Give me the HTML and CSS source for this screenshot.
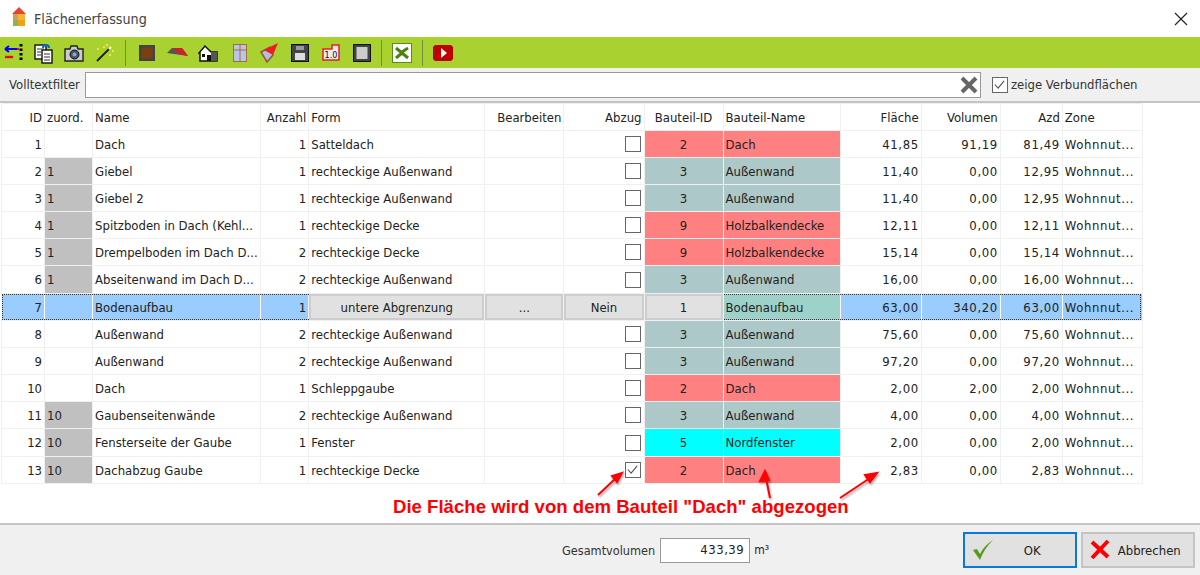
FILE: index.html
```html
<!DOCTYPE html>
<html lang="de">
<head>
<meta charset="utf-8">
<title>Flächenerfassung</title>
<link rel="stylesheet" href="styles.css">
</head>
<body>
<div class="dialog">
  <header class="titlebar">
    <svg class="appicon" width="16" height="20" viewBox="0 0 16 20"><path d="M8 0l7 7H1z" fill="#e8432c"/><rect x="2" y="7" width="5" height="6" fill="#c9a06a"/><rect x="7" y="7" width="7" height="6" fill="#f2b632"/><rect x="2" y="13" width="5" height="6" fill="#86b84a"/><rect x="7" y="13" width="7" height="6" fill="#f0a020"/></svg>
    <span class="title">Flächenerfassung</span>
    <svg class="close" width="14" height="14" viewBox="0 0 14 14"><path d="M1 1l12 12M13 1L1 13" stroke="#222" stroke-width="1.2" fill="none"/></svg>
  </header>
  <nav class="toolbar">
    <svg class="ic" width="20" height="20" viewBox="0 0 20 20"><path d="M1 6h12M1 6l4-3M1 6l4 3" stroke="#00f" stroke-width="2" fill="none"/><path d="M1 14h8" stroke="#f00" stroke-width="2.4"/><path d="M17 1v18" stroke="#000" stroke-width="3" stroke-dasharray="2.5 2"/><rect x="13" y="5" width="2" height="2" fill="#f00"/></svg>
    <svg class="ic" width="20" height="22" viewBox="0 0 20 22"><rect x="1" y="3" width="11" height="14" fill="#fff" stroke="#111" stroke-width="1.4"/><rect x="8" y="8" width="10" height="13" fill="#fff" stroke="#111" stroke-width="1.4"/><path d="M3 7h7M3 10h4M3 13h4M10 12h6M10 15h6M10 18h6" stroke="#333"/><path d="M9 6a3 3 0 0 1 6 0" stroke="#06c" stroke-width="2" fill="none"/></svg>
    <svg class="ic" width="20" height="18" viewBox="0 0 20 18"><path d="M1 5h5l1-3h6l1 3h5v12H1z" fill="#ccc" stroke="#222" stroke-width="1.4"/><circle cx="10.500" cy="10.500" r="4.500" fill="#456" stroke="#111"/><circle cx="10.500" cy="10.500" r="2" fill="#8ac"/></svg>
    <svg class="ic t1" width="20" height="20" viewBox="0 0 20 20"><path d="M2 18L14 6" stroke="#222" stroke-width="2"/><path d="M14 6l2-2" stroke="#fff" stroke-width="2"/><g fill="#f5e342"><rect x="11" y="1" width="2" height="2"/><rect x="17" y="7" width="2" height="2"/><rect x="2" y="5" width="2" height="2"/><rect x="14" y="11" width="2" height="2"/><rect x="8" y="3" width="2" height="2"/></g></svg>
    <span class="sep"></span>
    <svg class="ic t2" width="18" height="18" viewBox="0 0 18 18"><rect x="1" y="1" width="16" height="16" fill="#444"/><rect x="3.500" y="3.500" width="11" height="11" fill="#7a4010"/></svg>
    <svg class="ic t1" width="21" height="12" viewBox="0 0 21 12"><path d="M0 6l5-5h10l6 8z" fill="#555"/><path d="M6 1h9l6 8-9-2z" fill="#d0202a"/></svg>
    <svg class="ic" width="20" height="18" viewBox="0 0 20 18"><path d="M1 9l6-7 6 6h6v9H2V9z" fill="#fff" stroke="#111" stroke-width="1.5"/><path d="M13 8h6v9h-6z" fill="#555"/><rect x="9" y="11" width="4" height="6" fill="#111"/><rect x="4" y="10" width="3" height="3" fill="#111"/></svg>
    <svg class="ic t5" width="14" height="18" viewBox="0 0 14 18"><rect x="0.500" y="0.500" width="13" height="17" fill="#b7c5ea" stroke="#a86d3a"/><path d="M7 0v18M0 6h14" stroke="#a86d3a"/></svg>
    <svg class="ic t3" width="18" height="20" viewBox="0 0 18 20"><path d="M1 9l9-5 3 8-6 7z" fill="#b9bcd8" stroke="#8a5a3a" stroke-width="1.500"/><path d="M4 7L18 0l-5 12z" fill="#ee1c25"/></svg>
    <svg class="ic t3" width="18" height="18" viewBox="0 0 18 18"><rect x="0.500" y="0.500" width="17" height="17" fill="#444" stroke="#111"/><rect x="5" y="2" width="8" height="4" fill="#999"/><rect x="4" y="9" width="10" height="7" fill="#ddd"/></svg>
    <svg class="ic t3" width="18" height="17" viewBox="0 0 18 17"><path d="M1 5h9V1h7v15H1z" fill="#eee" stroke="#ee1c25" stroke-width="1.5"/><text class="ictext" x="9" y="14" text-anchor="middle">1.0</text></svg>
    <svg class="ic t3" width="18" height="18" viewBox="0 0 18 18"><rect x="0.500" y="0.500" width="17" height="17" fill="#444" stroke="#111"/><rect x="3.500" y="3" width="11" height="12" fill="#ccc"/></svg>
    <span class="sep"></span>
    <svg class="ic" width="20" height="20" viewBox="0 0 20 20"><rect x="0.500" y="0.500" width="19" height="19" fill="#fff" stroke="#5d8a1a"/><path d="M4 5l12 10M4 15l6-5M10 9l6-4" stroke="#4d8012" stroke-width="3"/></svg>
    <span class="sep"></span>
    <svg class="ic" width="20" height="16" viewBox="0 0 20 16"><path d="M2 0h16l2 2v12l-2 2H2l-2-2V2z" fill="#c00000"/><path d="M8 3l6 5-6 5z" fill="#fff"/></svg>
  </nav>
  <div class="filterbar">
    <label class="flabel" for="q">Volltextfilter</label>
    <div class="search">
      <input id="q" class="searchinput" type="text">
      <svg class="clear" width="18" height="18" viewBox="0 0 18 18"><path d="M2 2l14 14M16 2L2 16" stroke="#666" stroke-width="4"/></svg>
    </div>
    <span class="check on"><svg width="14" height="14" viewBox="0 0 14 14"><path d="M2 7l3.500 4L12 3" stroke="#555" stroke-width="1.200" fill="none"/></svg></span>
    <span class="flabel">zeige Verbundflächen</span>
  </div>
  <main class="tablearea">
    <table class="grid">
      <colgroup>
        <col class="c1"><col class="c2"><col class="c3"><col class="c4"><col class="c5"><col class="c6"><col class="c7"><col class="c8"><col class="c9"><col class="c10"><col class="c11"><col class="c12"><col class="c13">
      </colgroup>
      <thead>
        <tr><th class="r">ID</th><th>zuord.</th><th>Name</th><th class="r">Anzahl</th><th>Form</th><th class="r">Bearbeiten</th><th class="r">Abzug</th><th class="m">Bauteil-ID</th><th>Bauteil-Name</th><th class="r">Fläche</th><th class="r">Volumen</th><th class="r">Azd</th><th>Zone</th></tr>
      </thead>
      <tbody>
        <tr><td class="r">1</td><td></td><td>Dach</td><td class="r">1</td><td>Satteldach</td><td></td><td class="r"><span class="check"></span></td><td class="m red">2</td><td class="red">Dach</td><td class="r n">41,85</td><td class="r n">91,19</td><td class="r n">81,49</td><td class="n">Wohnnut...</td></tr>
        <tr><td class="r">2</td><td class="gray">1</td><td>Giebel</td><td class="r">1</td><td>rechteckige Außenwand</td><td></td><td class="r"><span class="check"></span></td><td class="m teal">3</td><td class="teal">Außenwand</td><td class="r n">11,40</td><td class="r n">0,00</td><td class="r n">12,95</td><td class="n">Wohnnut...</td></tr>
        <tr><td class="r">3</td><td class="gray">1</td><td>Giebel 2</td><td class="r">1</td><td>rechteckige Außenwand</td><td></td><td class="r"><span class="check"></span></td><td class="m teal">3</td><td class="teal">Außenwand</td><td class="r n">11,40</td><td class="r n">0,00</td><td class="r n">12,95</td><td class="n">Wohnnut...</td></tr>
        <tr><td class="r">4</td><td class="gray">1</td><td>Spitzboden in Dach (Kehl...</td><td class="r">1</td><td>rechteckige Decke</td><td></td><td class="r"><span class="check"></span></td><td class="m red">9</td><td class="red">Holzbalkendecke</td><td class="r n">12,11</td><td class="r n">0,00</td><td class="r n">12,11</td><td class="n">Wohnnut...</td></tr>
        <tr><td class="r">5</td><td class="gray">1</td><td>Drempelboden im Dach D...</td><td class="r">2</td><td>rechteckige Decke</td><td></td><td class="r"><span class="check"></span></td><td class="m red">9</td><td class="red">Holzbalkendecke</td><td class="r n">15,14</td><td class="r n">0,00</td><td class="r n">15,14</td><td class="n">Wohnnut...</td></tr>
        <tr class="tall"><td class="r">6</td><td class="gray">1</td><td>Abseitenwand im Dach D...</td><td class="r">2</td><td>rechteckige Außenwand</td><td></td><td class="r"><span class="check"></span></td><td class="m teal">3</td><td class="teal">Außenwand</td><td class="r n">16,00</td><td class="r n">0,00</td><td class="r n">16,00</td><td class="n">Wohnnut...</td></tr>
        <tr class="sel"><td class="r focuscell">7<span class="focus f1"></span></td><td></td><td>Bodenaufbau</td><td class="r">1</td><td class="btn m">untere Abgrenzung</td><td class="btn m">...</td><td class="btn m">Nein</td><td class="btn m">1</td><td class="mint focuscell">Bodenaufbau<span class="focus f2"></span></td><td class="r n">63,00</td><td class="r n">340,20</td><td class="r n">63,00</td><td class="n">Wohnnut...</td></tr>
        <tr><td class="r">8</td><td></td><td>Außenwand</td><td class="r">2</td><td>rechteckige Außenwand</td><td></td><td class="r"><span class="check"></span></td><td class="m teal">3</td><td class="teal">Außenwand</td><td class="r n">75,60</td><td class="r n">0,00</td><td class="r n">75,60</td><td class="n">Wohnnut...</td></tr>
        <tr><td class="r">9</td><td></td><td>Außenwand</td><td class="r">2</td><td>rechteckige Außenwand</td><td></td><td class="r"><span class="check"></span></td><td class="m teal">3</td><td class="teal">Außenwand</td><td class="r n">97,20</td><td class="r n">0,00</td><td class="r n">97,20</td><td class="n">Wohnnut...</td></tr>
        <tr><td class="r">10</td><td></td><td>Dach</td><td class="r">1</td><td>Schleppgaube</td><td></td><td class="r"><span class="check"></span></td><td class="m red">2</td><td class="red">Dach</td><td class="r n">2,00</td><td class="r n">2,00</td><td class="r n">2,00</td><td class="n">Wohnnut...</td></tr>
        <tr><td class="r">11</td><td class="gray">10</td><td>Gaubenseitenwände</td><td class="r">2</td><td>rechteckige Außenwand</td><td></td><td class="r"><span class="check"></span></td><td class="m teal">3</td><td class="teal">Außenwand</td><td class="r n">4,00</td><td class="r n">0,00</td><td class="r n">4,00</td><td class="n">Wohnnut...</td></tr>
        <tr class="tall"><td class="r">12</td><td class="gray">10</td><td>Fensterseite der Gaube</td><td class="r">1</td><td>Fenster</td><td></td><td class="r"><span class="check"></span></td><td class="m cyan">5</td><td class="cyan">Nordfenster</td><td class="r n">2,00</td><td class="r n">0,00</td><td class="r n">2,00</td><td class="n">Wohnnut...</td></tr>
        <tr><td class="r">13</td><td class="gray">10</td><td>Dachabzug Gaube</td><td class="r">1</td><td>rechteckige Decke</td><td></td><td class="r"><span class="check on"><svg width="14" height="14" viewBox="0 0 14 14"><path d="M2 7l3.500 4L12 3" stroke="#555" stroke-width="1.200" fill="none"/></svg></span></td><td class="m red">2</td><td class="red">Dach</td><td class="r n">2,83</td><td class="r n">0,00</td><td class="r n">2,83</td><td class="n">Wohnnut...</td></tr>
      </tbody>
    </table>
    <svg class="arrows" width="1200" height="60" viewBox="0 0 1200 60">
      <g stroke="#f00" stroke-width="2" fill="#f00">
        <path d="M598 34L616 17"/><path d="M622 12l-10 3 5 6z"/>
        <path d="M770 37L766 17"/><path d="M765 10l-5 10 9-1z"/>
        <path d="M840 37L870 17"/><path d="M877 12l-12 2 5 7z"/>
      </g>
    </svg>
    <p class="note">Die Fläche wird von dem Bauteil "Dach" abgezogen</p>
  </main>
  <footer class="footer">
    <span class="flabel sum">Gesamtvolumen</span>
    <span class="total n">433,39</span>
    <span class="unit">m³</span>
    <button class="action primary"><svg width="24" height="24" viewBox="0 0 24 24"><path d="M2 12l4-1 3 5C12 10 16 6 22 2 16 8 12 14 9 22z" fill="#5a9a1e"/></svg><span class="alabel">OK</span></button>
    <button class="action"><svg width="22" height="22" viewBox="0 0 22 22"><path d="M3 3l16 15M19 2L3 19" stroke="#f00" stroke-width="4"/></svg><span class="alabel">Abbrechen</span></button>
  </footer>
</div>
</body>
</html>
```
FILE: styles.css
```css
* { box-sizing: border-box; }
html, body { margin: 0; height: 100%; }
body { font-family: "DejaVu Sans Condensed", "DejaVu Sans", sans-serif; font-size: 13px; color: #222; background: #fff; overflow: hidden; }
.dialog { width: 1200px; height: 575px; display: flex; flex-direction: column; }
.titlebar { height: 37px; flex: none; display: flex; align-items: center; padding: 0 10px 0 11px; background: #fff; }
.appicon { margin-right: 7px; margin-top: -3px; }
.title { font-size: 14.2px; color: #444; }
.close { margin-left: auto; margin-right: 2px; }
.toolbar { height: 31px; flex: none; background: #a9d231; display: flex; align-items: center; padding-left: 4px; gap: 10px; }
.ic { flex: none; }
.t1 { margin-left: 1px; }
.t2 { margin-left: 2px; }
.t3 { margin-left: 3px; }
.t5 { margin-left: 5px; }
.sep { width: 1px; height: 26px; background: #6f8f3a; }
.ictext { font: 9px "DejaVu Sans Condensed", sans-serif; fill: #111; }
.filterbar { height: 35px; flex: none; background: #f0f0f0; border-bottom: 2px solid #c4c4c4; display: flex; align-items: center; padding-left: 9px; }
.flabel { white-space: nowrap; color: #333; }
.flabel.sum { font-size: 12.6px; }
.search { width: 896px; height: 26px; margin: 0 11px 0 5px; position: relative; }
.searchinput { width: 100%; height: 100%; border: 1px solid #999; background: #fff; display: block; outline: none; }
.clear { position: absolute; right: 3px; top: 4px; }
.check { display: inline-block; width: 16px; height: 16px; border: 1.500px solid #666; background: #fff; vertical-align: middle; flex: none; margin-right: 3px; }
.check svg { display: block; width: 13px; height: 13px; }
.tablearea { flex: 1; position: relative; background: #fff; }
.grid { table-layout: fixed; border-collapse: separate; border-spacing: 1px; background: #f0f0f0; margin-left: 1px; width: 1142px; }
.grid th, .grid td { background: #fff; height: 26px; padding: 0 2px; font-weight: normal; text-align: left; white-space: nowrap; overflow: hidden; color: #222; }
.grid tr.tall td { height: 27px; }
.c1 { width: 42px; } .c2 { width: 47px; } .c3 { width: 167px; } .c4 { width: 47px; } .c5 { width: 175px; } .c6 { width: 78px; } .c7 { width: 79px; } .c8 { width: 78px; } .c9 { width: 116px; } .c10 { width: 80px; } .c11 { width: 78px; } .c12 { width: 61px; } .c13 { width: 79px; }
.grid .r { text-align: right; }
.grid .m { text-align: center; }
.grid .n { letter-spacing: 0.6px; }
.grid .check { margin-right: 1px; }
.grid .red { background: #ff8080; }
.grid .teal { background: #adc8c8; }
.grid .cyan { background: #00ffff; }
.grid .gray { background: #c0c0c0; }
.grid tr.sel td { background: #99ccff; box-shadow: -1px 0 0 #fff; }
.grid tr.sel td.btn { background: #e1e1e1; border: 2px solid #cdcdcd; box-shadow: none; }
.grid tr.sel td.mint { background: #9cd2c9; box-shadow: none; }
.grid td.focuscell { position: relative; overflow: visible; }
.focus { position: absolute; left: 0; top: 0; height: 100%; border: 1px dotted #333; pointer-events: none; }
.focus.f1 { width: 307px; border-right: 0; }
.focus.f2 { width: 417px; border-left: 0; }
.arrows { position: absolute; left: 0; top: 358px; pointer-events: none; filter: drop-shadow(1px 2px 1px rgba(0,0,0,.35)); }
.note { position: absolute; left: 393px; top: 393px; margin: 0; font: bold 18.6px "Liberation Sans", sans-serif; color: #f00; white-space: nowrap; }
.footer { height: 52px; flex: none; background: #f0f0f0; border-top: 2px solid #c4c4c4; display: flex; align-items: center; padding: 0 4px 0 562px; }
.total { width: 90px; height: 25px; margin-left: 5px; border: 1px solid #999; background: #fff; text-align: right; padding: 3px 5px; letter-spacing: 0.5px; }
.unit { margin: 0 8px 0 4px; width: 201px; font-size: 12px; flex: none; }
.action { width: 114px; height: 36px; margin-left: 4px; font: inherit; color: #222; background: #e1e1e1; border: 2px solid #c4c4c4; display: flex; align-items: center; padding: 0 6px; }
.action.primary { border-color: #0a78d7; margin-left: 0; }
.alabel { flex: 1; text-align: center; }
```
